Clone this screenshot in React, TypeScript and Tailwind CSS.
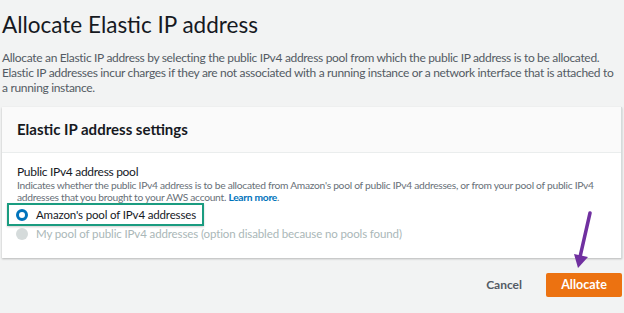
import React from "react";

export default function App() {
  return (
    <div
      className="w-[624px] h-[313px] bg-[#f2f3f3] overflow-hidden relative whitespace-nowrap"
      style={{ fontFamily: 'Lato, "Open Sans", sans-serif' }}
    >
      <div className="pl-[2px] pr-[2px] pt-[10px]">
        <h1 className="text-[22.5px] leading-[30px] text-[#16191f] font-normal">Allocate Elastic IP address</h1>
        <p className="mt-[10px] text-[12px] tracking-[-0.32px] leading-[15px] text-[#545b64]">
          Allocate an Elastic IP address by selecting the public IPv4 address pool from which the public IP address is to be allocated.
          <br />
          Elastic IP addresses incur charges if they are not associated with a running instance or a network interface that is attached to
          <br />
          a running instance.
        </p>

        <div className="mt-[12px] bg-white shadow-[0_1px_2px_rgba(0,0,0,0.25)] border-r border-[#d5dbdb]">
          <div className="h-[46px] bg-[#fafafa] border-b border-[#eaeded] flex items-center px-[15px]">
            <h2 className="text-[15px] font-bold text-[#16191f]">Elastic IP address settings</h2>
          </div>
          <div className="px-[15px] pt-[11px] pb-[16px]">
            <div className="text-[12px] tracking-[-0.3px] leading-[15px] text-[#16191f]">Public IPv4 address pool</div>
            <div className="text-[10.25px] tracking-[-0.28px] leading-[12px] text-[#687078]">
              Indicates whether the public IPv4 address is to be allocated from Amazon's pool of public IPv4 addresses, or from your pool of public IPv4
              <br />
              addresses that you brought to your AWS account. <span className="font-bold text-[#0073bb]">Learn more</span>.
            </div>
            <div className="-ml-[10px] w-[197px] h-[23px] border-2 border-[#1a9c80] shadow-[0_1px_2px_rgba(0,0,0,0.2)] flex items-center pl-[7px] gap-[8px]">
              <span className="w-[12px] h-[12px] rounded-full border-[3.5px] border-[#0073bb] bg-white shrink-0" />
              <span className="text-[11.5px] tracking-[-0.15px] text-[#16191f]">Amazon's pool of IPv4 addresses</span>
            </div>
            <div className="-ml-[1px] flex items-center gap-[8px] h-[16px]">
              <span className="w-[12px] h-[12px] rounded-full bg-[#d5dbdb] shrink-0" />
              <span className="text-[11.5px] tracking-[-0.12px] text-[#aab7b8]">My pool of public IPv4 addresses (option disabled because no pools found)</span>
            </div>
          </div>
        </div>

        <div className="mt-[15px] flex justify-end items-center gap-[24px]">
          <span className="text-[12px] font-bold text-[#545b64]">Cancel</span>
          <button className="w-[76px] h-[24px] bg-[#ec7211] text-white text-[12.5px] font-bold rounded-[2px]">Allocate</button>
        </div>
      </div>

      <svg className="absolute left-0 top-0 pointer-events-none" width="624" height="313">
        <line x1="590" y1="213" x2="580" y2="257" stroke="#7030a0" strokeWidth="3.5" strokeLinecap="round" />
        <polygon points="574,254 588,257 578,268" fill="#7030a0" />
      </svg>
    </div>
  );
}
